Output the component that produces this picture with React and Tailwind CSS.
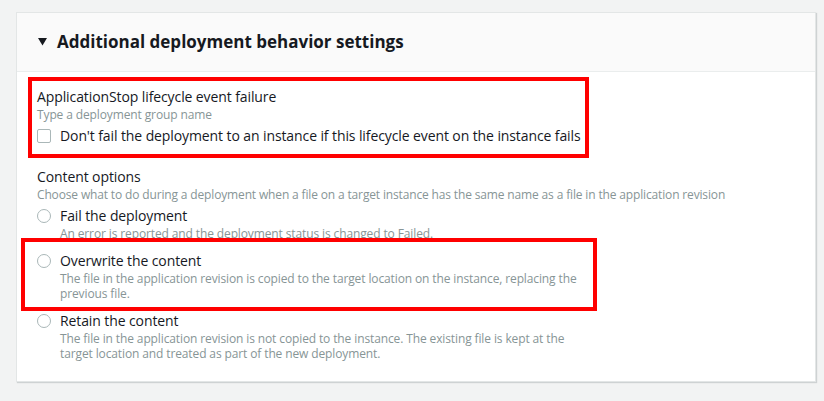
import React from "react";

const options = [
  {
    label: "Fail the deployment",
    desc: ["An error is reported and the deployment status is changed to Failed."],
  },
  {
    label: "Overwrite the content",
    desc: [
      "The file in the application revision is copied to the target location on the instance, replacing the",
      "previous file.",
    ],
  },
  {
    label: "Retain the content",
    desc: [
      "The file in the application revision is not copied to the instance. The existing file is kept at the",
      "target location and treated as part of the new deployment.",
    ],
  },
];

function Radio() {
  return (
    <span className="mt-[3px] h-[14px] w-[14px] shrink-0 rounded-full border border-[#aab7b8] bg-white" />
  );
}

export default function App() {
  return (
    <div
      className="relative h-[401px] w-[824px] bg-[#f2f3f3] pl-[16px] pt-[12px]"
      style={{ fontFamily: '"Open Sans", "Liberation Sans", sans-serif' }}
    >
      <div className="w-[800px] border border-[#e3e6e6] bg-white shadow-[1px_1px_1px_rgba(0,28,36,0.15)]">
        <div className="flex h-[59px] items-center gap-[10px] border-b border-[#eaeded] bg-[#fafafa] pl-[21px]">
          <svg width="9" height="8" viewBox="0 0 9 8">
            <path d="M0 0 L9 0 L4.5 7.5 Z" fill="#16191f" />
          </svg>
          <span className="text-[17px] font-bold text-[#16191f]">
            Additional deployment behavior settings
          </span>
        </div>

        <div className="px-[20px] pb-[20px] pt-[15px] text-[#16191f]">
          <div className="text-[14px] leading-[20px] tracking-[-0.1px]">ApplicationStop lifecycle event failure</div>
          <div className="text-[12px] leading-[16px] tracking-[-0.12px] text-[#879596]">Type a deployment group name</div>
          <label className="mt-[3px] flex items-start gap-[9px] text-[14px] leading-[20px] tracking-[-0.1px]">
            <span className="mt-[3px] h-[14px] w-[14px] shrink-0 rounded-[2px] border border-[#aab7b8] bg-white" />
            <span>Don't fail the deployment to an instance if this lifecycle event on the instance fails</span>
          </label>

          <div className="mt-[21px] text-[14px] leading-[20px] tracking-[-0.1px]">Content options</div>
          <div className="text-[12px] leading-[16px] tracking-[-0.15px] text-[#879596]">
            Choose what to do during a deployment when a file on a target instance has the same name as a file in the application revision
          </div>

          <div className="mt-[3px] flex flex-col gap-[10px]">
            {options.map((o) => (
              <div key={o.label} className="flex items-start gap-[9px]">
                <Radio />
                <div>
                  <div className="text-[14px] leading-[20px] tracking-[-0.1px]">{o.label}</div>
                  <div className="text-[12px] leading-[15px] tracking-[-0.12px] text-[#879596]">
                    {o.desc.map((d) => (
                      <div key={d}>{d}</div>
                    ))}
                  </div>
                </div>
              </div>
            ))}
          </div>
        </div>
      </div>

      <div className="absolute left-[28px] top-[77px] h-[81px] w-[561px] border-[4px] border-[#ff0000]" />
      <div className="absolute left-[21px] top-[238px] h-[73px] w-[576px] border-[4px] border-[#ff0000]" />
    </div>
  );
}
